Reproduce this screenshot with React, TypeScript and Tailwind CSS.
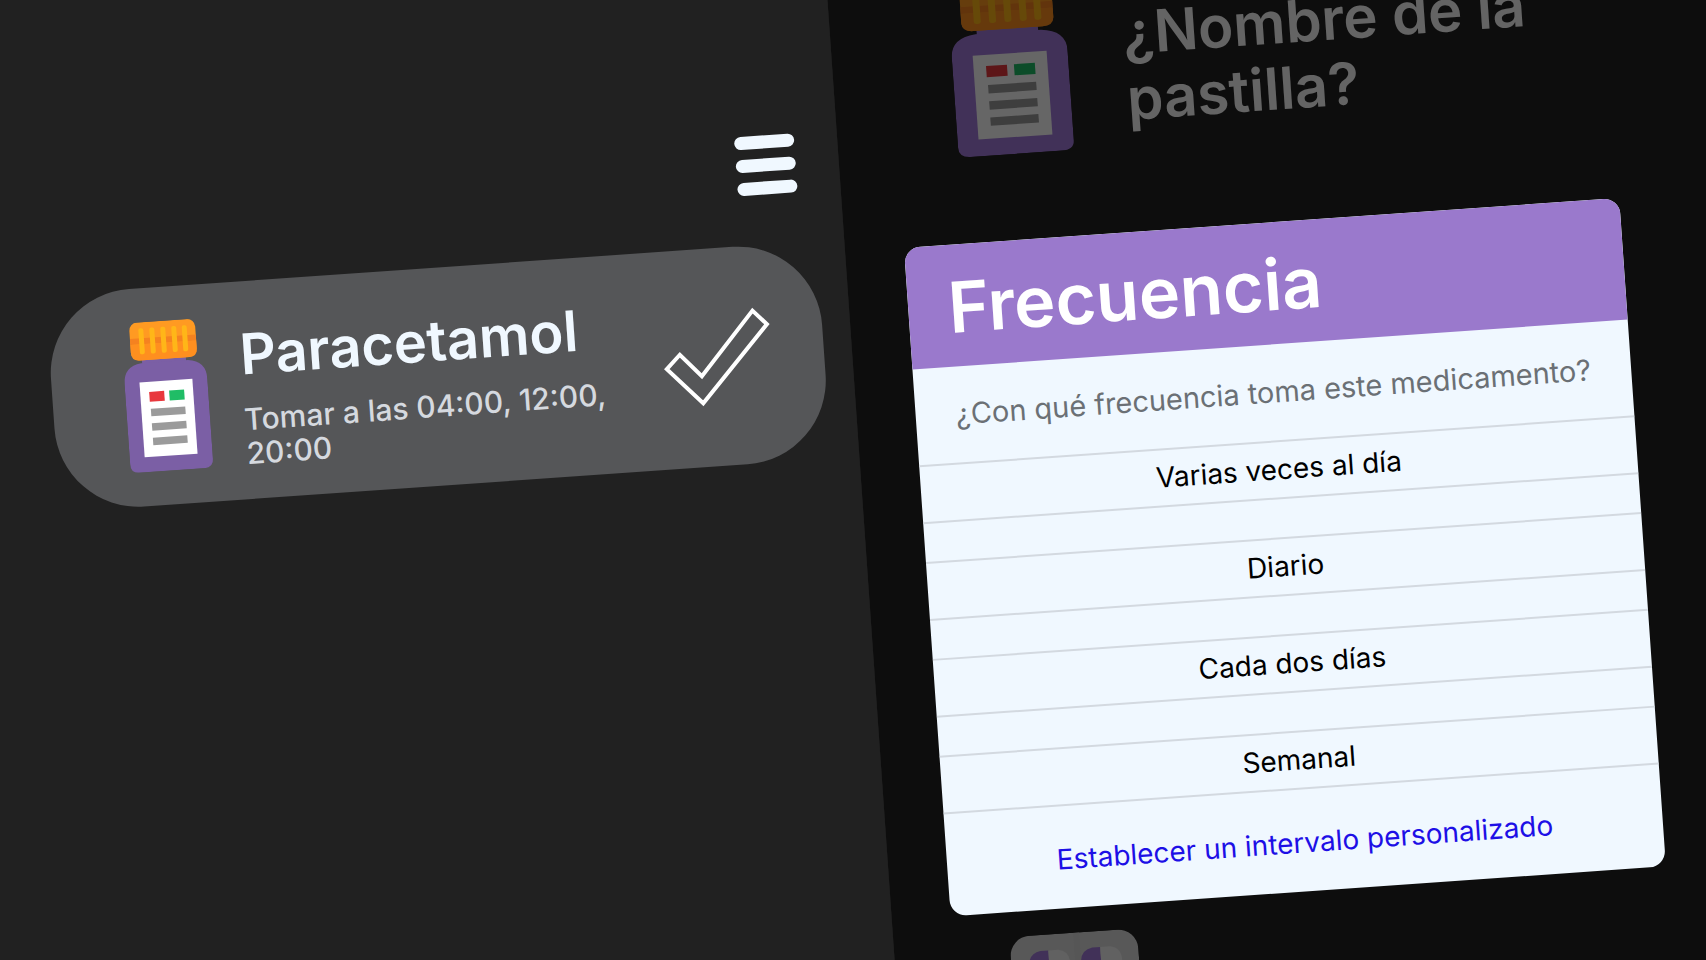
const frequencies = ["Varias veces al día", "Diario", "Cada dos días", "Semanal"];

function PillBottle({ className }: { className: string }) {
  return (
    <svg viewBox="0 0 83 150" preserveAspectRatio="none" className={className} aria-hidden="true">
      <rect x="19" y="32" width="44" height="14" fill="currentColor" />
      <path
        d="M18 41H65Q83 43 83 61V141Q83 150 74 150H9Q0 150 0 141V61Q0 43 18 41Z"
        fill="currentColor"
      />
      <rect x="8.500" y="0" width="66" height="38" rx="8" fill="#ff9a22" />
      <rect x="8.500" y="16" width="66" height="6" fill="#f58220" />
      <path d="M8.500 22H74.500V30Q74.500 38 66.500 38H16.500Q8.500 38 8.500 30Z" fill="#ff8f1f" />
      {[20, 31, 42, 53, 63.5].map((x) => (
        <rect key={x} x={x - 2.5} y="6" width="5" height="26" rx="2" fill="#ffb618" />
      ))}
      <rect x="15" y="60" width="53" height="75" fill="#ffffff" />
      <rect x="24" y="70" width="15" height="10" fill="#e8383d" />
      <rect x="44" y="70" width="15" height="10" fill="#20bd66" />
      <rect x="24.500" y="87" width="34.500" height="7.500" fill="#9b9b9b" />
      <rect x="24.500" y="101.500" width="34.500" height="7.500" fill="#9b9b9b" />
      <rect x="24.500" y="116" width="34.500" height="7.500" fill="#9b9b9b" />
    </svg>
  );
}

function CheckOutline() {
  return (
    <svg viewBox="0 0 112 100" className="h-[100px] w-[112px]" aria-hidden="true">
      <path
        d="M93.500 6L107 20.500L38 95L4 58.500L18 45L38.500 68Z"
        fill="none"
        stroke="#ffffff"
        strokeWidth="4"
      />
    </svg>
  );
}

function BlisterPack() {
  return (
    <svg viewBox="0 0 128 128" className="size-32 shrink-0" aria-hidden="true">
      <rect width="128" height="128" rx="20" fill="#dcdcdc" />
      <rect x="64" width="6" height="128" fill="#d6d6d6" />
      {[18, 70].map((x) => (
        <g key={x}>
          <path d={`M${x + 20} 16H${x + 12}Q${x} 18 ${x} 30V36H${x + 20}Z`} fill="#a47cdc" />
          <path d={`M${x + 20} 16H${x + 30}Q${x + 41} 18 ${x + 41} 30V36H${x + 20}Z`} fill="#f2f2f2" />
        </g>
      ))}
    </svg>
  );
}

function Reminders() {
  return (
    <main className="flex flex-col gap-[50px] bg-[#212121] pt-[194px] pr-7 pl-[124px]">
      <button
        type="button"
        aria-label="Menú"
        className="mr-[15px] flex w-[60px] flex-col gap-[10px] self-end"
      >
        <span className="h-[13px] w-full rounded-full bg-[#f0f8ff]" />
        <span className="h-[13px] w-full rounded-full bg-[#f0f8ff]" />
        <span className="h-[13px] w-full rounded-full bg-[#f0f8ff]" />
      </button>
      <article className="flex h-[218px] items-center rounded-[84px] bg-[#555658] pr-[50px] pl-[73px]">
        <PillBottle className="h-[150px] w-[83px] shrink-0 text-[#7b5fa5]" />
        <div className="ml-[34px] min-w-0 flex-1 pt-3">
          <h2 className="text-[56px] leading-[64px] font-semibold text-[#f0f8ff]">Paracetamol</h2>
          <p className="mt-4 w-[390px] text-[30px] leading-[34px] font-medium text-[#d5d9df]">
            Tomar a las 04:00, 12:00, 20:00
          </p>
        </div>
        <button type="button" aria-label="Marcar como tomada" className="shrink-0">
          <CheckOutline />
        </button>
      </article>
    </main>
  );
}

function FrequencyDialog() {
  return (
    <section
      role="dialog"
      aria-labelledby="frequency-title"
      className="overflow-hidden rounded-2xl bg-[#f0f8ff] text-center text-[28px] leading-[34px]"
    >
      <h2
        id="frequency-title"
        className="flex h-[122px] items-center bg-[#9a79cc] px-10 pt-1 text-[70px] leading-none font-semibold text-white"
      >
        Frecuencia
      </h2>
      <p className="flex h-24 items-center justify-center text-[29px] text-[#6b7075]">
        ¿Con qué frecuencia toma este medicamento?
      </p>
      <div className="flex flex-col gap-[38px]">
        {frequencies.map((label) => (
          <button
            key={label}
            type="button"
            className="h-[59px] w-full border-y-2 border-[#d3d9e0] pb-0.5 text-black"
          >
            {label}
          </button>
        ))}
      </div>
      <a href="#intervalo" className="flex h-[102px] items-center justify-center pt-1 text-[#1d0fe6]">
        Establecer un intervalo personalizado
      </a>
    </section>
  );
}

function NewPill() {
  return (
    <section className="relative overflow-hidden bg-[#212121]">
      <div className="pt-[62px] pl-[120px]">
        <div className="flex items-end">
          <PillBottle className="h-[168px] w-[116px] shrink-0 text-[#a47cdc]" />
          <h1 className="mb-[14px] ml-14 w-[460px] text-[58px] leading-[66px] font-semibold text-[#fbfbfb]">
            ¿Nombre de la pastilla?
          </h1>
        </div>
        <div className="-ml-1 pt-[781px]">
          <BlisterPack />
        </div>
      </div>
      <div className="absolute inset-0 bg-black/60 pt-[316px] pr-[133px] pl-[59px]">
        <FrequencyDialog />
      </div>
    </section>
  );
}

export default function App() {
  return (
    <div className="h-screen overflow-hidden bg-[#212121] font-['Inter',sans-serif]">
      <div className="-mx-16 flex h-full flex-col justify-center">
        <div className="grid h-[calc(100vh+8rem)] shrink-0 -rotate-4 grid-cols-[minmax(0,925fr)_minmax(0,909fr)] grid-rows-1 overflow-hidden">
          <Reminders />
          <NewPill />
        </div>
      </div>
    </div>
  );
}
